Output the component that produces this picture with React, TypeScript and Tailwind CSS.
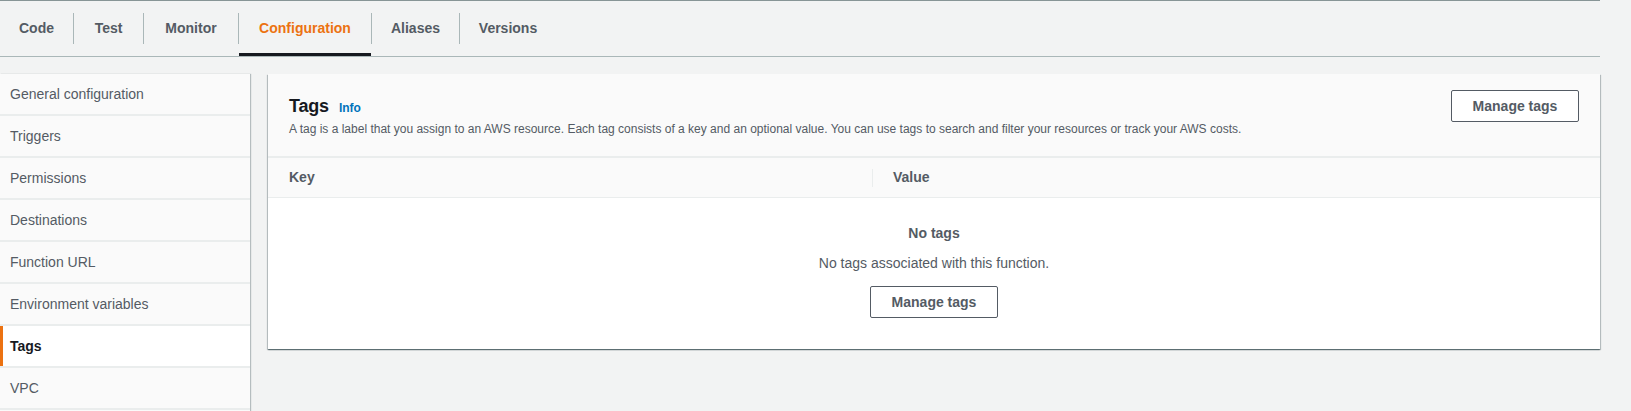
import React from "react";

const tabs: [string, number][] = [
  ["Code", 73],
  ["Test", 69],
  ["Monitor", 94],
  ["Configuration", 132],
  ["Aliases", 87],
  ["Versions", 96],
];
const side = [
  "General configuration",
  "Triggers",
  "Permissions",
  "Destinations",
  "Function URL",
  "Environment variables",
  "Tags",
  "VPC",
];

export default function App() {
  return (
    <div className="w-[1631px] h-[411px] bg-[#f2f3f3] overflow-hidden font-['Liberation_Sans',Arial,sans-serif]">
      <div className="w-[1600px]">
        <div className="border-t border-[#879596] border-b border-b-[#aab7b8] h-[57px] flex items-stretch">
          {tabs.map(([t, w], i) => {
            const active = t === "Configuration";
            return (
              <React.Fragment key={t}>
                {i > 0 && <div className="w-px bg-[#aab7b8] my-[12px]" />}
                <div
                  style={{ width: w }}
                  className={`relative flex items-center justify-center text-[14px] font-bold ${
                    active ? "text-[#ec7211]" : "text-[#545b64]"
                  }`}
                >
                  {t}
                  {active && (
                    <div className="absolute left-0 right-0 bottom-0 h-[3px] bg-[#16191f]" />
                  )}
                </div>
              </React.Fragment>
            );
          })}
        </div>
        <div className="flex pt-[17px]">
          <div className="w-[250px] shrink-0 shadow-[1px_0_1px_0_rgba(0,28,36,0.25)] flex flex-col gap-[2px] bg-[#eaeded]">
            {side.map((s) => {
              const active = s === "Tags";
              return (
                <div
                  key={s}
                  className={`relative h-[40px] flex items-center pl-[10px] text-[14px] ${
                    active
                      ? "bg-white text-[#16191f] font-bold"
                      : "bg-[#fafafa] text-[#545b64]"
                  }`}
                >
                  {active && (
                    <div className="absolute left-0 top-0 bottom-0 w-[3px] bg-[#ec7211]" />
                  )}
                  {s}
                </div>
              );
            })}
            <div className="h-[20px] bg-[#fafafa]" />
          </div>
          <div className="flex-1 ml-[18px]">
            <div className="bg-white shadow-[0_1px_1px_0_rgba(0,28,36,0.4),1px_1px_1px_0_rgba(0,28,36,0.2),-1px_1px_1px_0_rgba(0,28,36,0.2)]">
              <div className="bg-[#fafafa] h-[84px] border-b-2 border-[#eaeded] flex items-start justify-between px-[21px]">
                <div className="pt-[19px]">
                  <div className="flex items-baseline gap-[10px]">
                    <span className="text-[18px] font-bold text-[#16191f] tracking-[-0.2px]">Tags</span>
                    <span className="text-[12px] font-bold text-[#0073bb]">Info</span>
                  </div>
                  <div className="text-[12px] text-[#545b64]">
                    A tag is a label that you assign to an AWS resource. Each tag consists of a key and an optional value. You can use tags to search and filter your resources or track your AWS costs.
                  </div>
                </div>
                <button className="mt-[16px] w-[128px] h-[32px] border border-[#545b64] rounded-[2px] bg-white text-[14px] font-bold text-[#545b64]">
                  Manage tags
                </button>
              </div>
              <div className="h-[40px] bg-[#fafafa] border-b border-[#eaeded] flex items-center text-[14px] font-bold text-[#545b64]">
                <div className="w-[605px] pl-[21px] flex items-center justify-between">
                  <span>Key</span>
                  <div className="w-px h-[18px] bg-[#eaeded]" />
                </div>
                <div className="pl-[20px]">Value</div>
              </div>
              <div className="h-[151px] flex flex-col items-center text-[#545b64] leading-[21px]">
                <div className="text-[14px] font-bold mt-[25px]">No tags</div>
                <div className="text-[14px] mt-[9px]">No tags associated with this function.</div>
                <button className="mt-[12px] w-[128px] h-[32px] border border-[#545b64] rounded-[2px] bg-white text-[14px] font-bold text-[#545b64]">
                  Manage tags
                </button>
              </div>
            </div>
          </div>
        </div>
      </div>
    </div>
  );
}
